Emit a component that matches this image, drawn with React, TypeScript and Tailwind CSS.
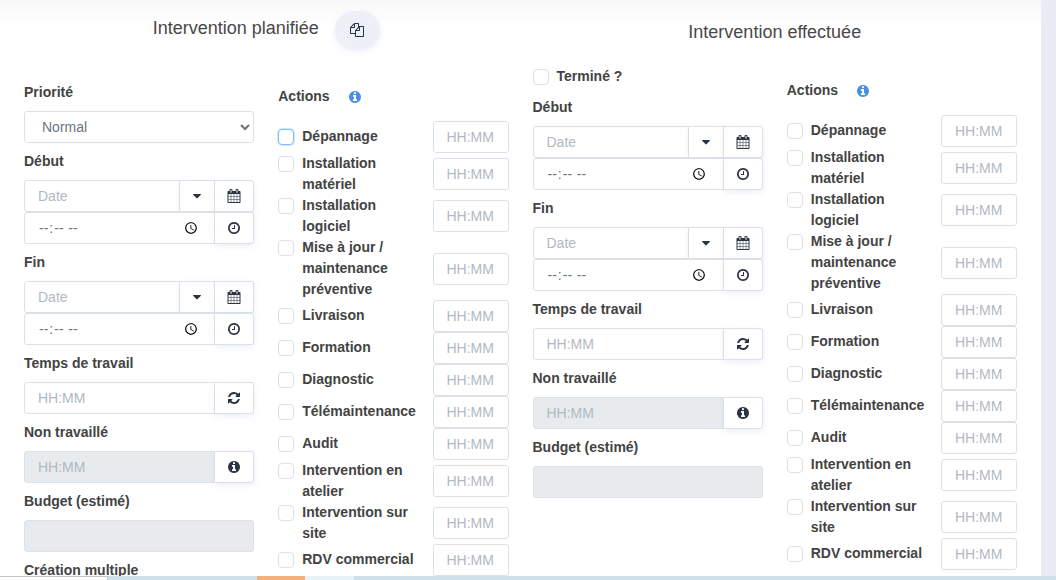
import { useId, type ReactNode } from "react";

const paths = {
  copy: "M1696 384q40 0 68 28t28 68v1216q0 40-28 68t-68 28h-960q-40 0-68-28t-28-68v-288h-544q-40 0-68-28t-28-68v-672q0-40 20-88t48-76l408-408q28-28 76-48t88-20h416q40 0 68 28t28 68v328q68-40 128-40h416zm-544 213l-299 299h299v-299zm-640-384l-299 299h299v-299zm196 647l316-316v-416h-384v416q0 40-28 68t-68 28h-416v640h512v-256q0-40 20-88t48-76zm956 804v-1152h-384v416q0 40-28 68t-68 28h-416v640h896z",
  calendar:
    "M192 1664h288v-288h-288v288zm352 0h320v-288h-320v288zm-352-352h288v-320h-288v320zm352 0h320v-320h-320v320zm-352-384h288v-288h-288v288zm736 736h320v-288h-320v288zm-384-736h320v-288h-320v288zm768 736h288v-288h-288v288zm-384-352h320v-320h-320v320zm-352-864v-288q0-13-9.5-22.5t-22.5-9.5h-64q-13 0-22.5 9.5t-9.5 22.5v288q0 13 9.5 22.5t22.5 9.5h64q13 0 22.5-9.5t9.5-22.5zm736 864h288v-320h-288v320zm-384-384h320v-288h-320v288zm384 0h288v-288h-288v288zm32-480v-288q0-13-9.5-22.5t-22.5-9.5h-64q-13 0-22.5 9.5t-9.5 22.5v288q0 13 9.5 22.5t22.5 9.5h64q13 0 22.5-9.5t9.5-22.5zm384-64v1280q0 52-38 90t-90 38h-1408q-52 0-90-38t-38-90v-1280q0-52 38-90t90-38h128v-96q0-66 47-113t113-47h64q66 0 113 47t47 113v96h384v-96q0-66 47-113t113-47h64q66 0 113 47t47 113v96h128q52 0 90 38t38 90z",
  clock:
    "M1024 544v448q0 14-9 23t-23 9h-320q-14 0-23-9t-9-23v-64q0-14 9-23t23-9h224v-352q0-14 9-23t23-9h64q14 0 23 9t9 23zm416 352q0-148-73-273t-198-198-273-73-273 73-198 198-73 273 73 273 198 198 273 73 273-73 198-198 73-273zm224 0q0 209-103 385.5t-279.5 279.5-385.5 103-385.5-103-279.5-279.5-103-385.5 103-385.5 279.5-279.5 385.5-103 385.5 103 279.5 279.5 103 385.5z",
  refresh:
    "M1639 1056q0 5-1 7-64 268-268 434.5t-478 166.5q-146 0-282.5-55t-243.5-157l-129 129q-19 19-45 19t-45-19-19-45v-448q0-26 19-45t45-19h448q26 0 45 19t19 45-19 45l-137 137q71 66 161 102t187 36q134 0 250-65t186-179q11-17 53-117 8-23 30-23h192q13 0 22.5 9.5t9.5 22.5zm25-800v448q0 26-19 45t-45 19h-448q-26 0-45-19t-19-45 19-45l138-138q-148-137-349-137-134 0-250 65t-186 179q-11 17-53 117-8 23-30 23h-199q-13 0-22.5-9.5t-9.5-22.5v-7q65-268 270-434.5t480-166.5q146 0 284 55.5t245 156.5l130-129q19-19 45-19t45 19 19 45z",
  info: "M1152 1376v-160q0-14-9-23t-23-9h-96v-512q0-14-9-23t-23-9h-320q-14 0-23 9t-9 23v160q0 14 9 23t23 9h96v320h-96q-14 0-23 9t-9 23v160q0 14 9 23t23 9h448q14 0 23-9t9-23zm-128-896v-160q0-14-9-23t-23-9h-192q-14 0-23 9t-9 23v160q0 14 9 23t23 9h192q14 0 23-9t9-23zm640 416q0 209-103 385.5t-279.5 279.5-385.5 103-385.5-103-279.5-279.5-103-385.5 103-385.5 279.5-279.5 385.5-103 385.5 103 279.5 279.5 103 385.5z",
  caret: "M1408 704q0 26-19 45l-448 448q-19 19-45 19t-45-19l-448-448q-19-19-19-45t19-45 45-19h896q26 0 45 19t19 45z",
};

function Icon({ name, className = "size-[14px]" }: { name: keyof typeof paths; className?: string }) {
  return (
    <svg viewBox="0 0 1792 1792" fill="currentColor" aria-hidden="true" className={className}>
      <path d={paths[name]} />
    </svg>
  );
}

const inputBase = "h-8 min-w-0 border border-[#dce1e7] px-[13px] text-sm text-[#6c757d] outline-none placeholder:text-[#b1b9c2]";
const addonBase =
  "flex h-8 shrink-0 items-center justify-center border border-l-0 border-[#dce1e7] bg-white text-[#2b3442] shadow-[0_2px_6px_rgba(190,210,240,0.35)]";
const labelBase = "mt-2 mb-2 block text-sm leading-[21px] font-bold text-[#434343]";
const checkBase = "size-4 shrink-0 appearance-none rounded border bg-white";

function AddonButton({ icon, label }: { icon: keyof typeof paths; label: string }) {
  return (
    <button type="button" aria-label={label} className={`${addonBase} w-[39px] rounded-r-[3px]`}>
      <Icon name={icon} />
    </button>
  );
}

function DateTimeField({ label }: { label: string }) {
  const id = useId();
  return (
    <div>
      <label htmlFor={id} className={labelBase}>
        {label}
      </label>
      <div className="flex">
        <input id={id} type="text" placeholder="Date" className={`${inputBase} flex-1 rounded-l-[3px] bg-white`} />
        <button type="button" aria-label="Choisir une date" className={`${addonBase} w-[35px]`}>
          <Icon name="caret" />
        </button>
        <AddonButton icon="calendar" label="Calendrier" />
      </div>
      <div className="flex">
        <input type="time" aria-label={`${label}, heure`} className={`${inputBase} flex-1 rounded-l-[3px] bg-white`} />
        <AddonButton icon="clock" label="Heure actuelle" />
      </div>
    </div>
  );
}

function DurationField({
  label,
  icon,
  action,
  disabled,
}: {
  label: string;
  icon: keyof typeof paths;
  action: string;
  disabled?: boolean;
}) {
  const id = useId();
  return (
    <div>
      <label htmlFor={id} className={labelBase}>
        {label}
      </label>
      <div className="flex">
        <input
          id={id}
          type="text"
          placeholder="HH:MM"
          disabled={disabled}
          className={`${inputBase} flex-1 rounded-l-[3px] bg-white disabled:bg-[#e7ebee]`}
        />
        <AddonButton icon={icon} label={action} />
      </div>
    </div>
  );
}

function CommonFields() {
  const id = useId();
  return (
    <>
      <DateTimeField label="Début" />
      <DateTimeField label="Fin" />
      <DurationField label="Temps de travail" icon="refresh" action="Recalculer" />
      <DurationField label="Non travaillé" icon="info" action="Informations" disabled />
      <label htmlFor={id} className={labelBase}>
        Budget (estimé)
      </label>
      <input id={id} type="text" disabled className={`${inputBase} block w-full rounded-[3px] bg-[#e7ebee]`} />
    </>
  );
}

const actions = [
  { name: "Dépannage" },
  { name: "Installation matériel", wraps: true },
  { name: "Installation logiciel", wraps: true },
  { name: "Mise à jour / maintenance préventive", wraps: true },
  { name: "Livraison" },
  { name: "Formation" },
  { name: "Diagnostic" },
  { name: "Télémaintenance" },
  { name: "Audit" },
  { name: "Intervention en atelier", wraps: true },
  { name: "Intervention sur site", wraps: true },
  { name: "RDV commercial" },
];

function Actions({ highlighted }: { highlighted?: string }) {
  const prefix = useId();
  return (
    <>
      <div className="mb-[14px] flex items-center gap-[18px] text-sm leading-[21px] font-bold text-[#434343]">
        Actions
        <Icon name="info" className="size-[14px] text-[#4a90e2]" />
      </div>
      {actions.map(({ name, wraps }, i) => (
        <div key={name} className="flex items-center">
          <div className={`flex flex-1 items-start gap-2 self-start ${wraps ? "" : "pt-[5px]"}`}>
            <input
              id={`${prefix}-${i}`}
              type="checkbox"
              className={`${checkBase} mt-[3px] ${
                name === highlighted ? "border-[#80bdff] shadow-[0_0_0_1px_#d5e8fc]" : "border-[#dfe0e6]"
              }`}
            />
            <label htmlFor={`${prefix}-${i}`} className="mr-3 flex-1 text-sm leading-[21px] font-bold text-[#434343]">
              {name}
            </label>
          </div>
          <input
            type="text"
            placeholder="HH:MM"
            aria-label={`Durée ${name}`}
            className={`${inputBase} w-[76px] rounded-[3px] bg-white`}
          />
        </div>
      ))}
    </>
  );
}

function Section({ header, children }: { header: ReactNode; children: ReactNode }) {
  return (
    <section>
      <div className="flex h-[60px] items-center justify-center">{header}</div>
      <div className="grid grid-cols-2 gap-6">{children}</div>
    </section>
  );
}

export default function App() {
  const id = useId();
  const headingClass = "text-lg leading-6 text-[#484848]";
  return (
    <div className="flex h-screen flex-col overflow-hidden bg-[#e9ecf4] font-['Liberation_Sans',Arial,sans-serif]">
      <main className="mr-[15px] grid min-h-0 flex-1 grid-cols-2 gap-6 overflow-hidden bg-linear-to-b from-[#f8f8f8] to-white to-[24px] px-6">
        <Section
          header={
            <div className="flex items-center gap-4">
              <h2 className={`${headingClass} pb-1`}>Intervention planifiée</h2>
              <button
                type="button"
                aria-label="Copier"
                className="flex h-[38px] w-[45px] items-center justify-center rounded-full bg-[#edf0f6] text-[#2b3442] shadow-[0_2px_6px_rgba(190,210,240,0.35)]"
              >
                <Icon name="copy" />
              </button>
            </div>
          }
        >
          <div className="pt-[14px]">
            <label htmlFor={id} className={labelBase}>
              Priorité
            </label>
            <select id={id} className={`${inputBase} block w-full rounded-[3px] bg-white`}>
              <option>Normal</option>
            </select>
            <CommonFields />
            <div className={labelBase}>Création multiple</div>
          </div>
          <div className="pt-[26px]">
            <Actions highlighted="Dépannage" />
          </div>
        </Section>
        <Section header={<h2 className={`${headingClass} pt-1`}>Intervention effectuée</h2>}>
          <div className="pt-[6px]">
            <div className="mb-[10px] flex items-start gap-2">
              <input id={`${id}-done`} type="checkbox" className={`${checkBase} mt-[3px] border-[#dfe0e6]`} />
              <label htmlFor={`${id}-done`} className="text-sm leading-[21px] font-bold text-[#434343]">
                Terminé ?
              </label>
            </div>
            <CommonFields />
          </div>
          <div className="pt-5">
            <Actions />
          </div>
        </Section>
      </main>
      <footer className="flex h-1 shrink-0 bg-[#d0e0ea]">
        <div className="w-[108px] border-t border-r border-[#c4c4c4] bg-white" />
        <div className="w-[149px]" />
        <div className="w-12 bg-[#f4b07b]" />
        <div className="w-[49px] bg-[#e8f3f7]" />
      </footer>
    </div>
  );
}
